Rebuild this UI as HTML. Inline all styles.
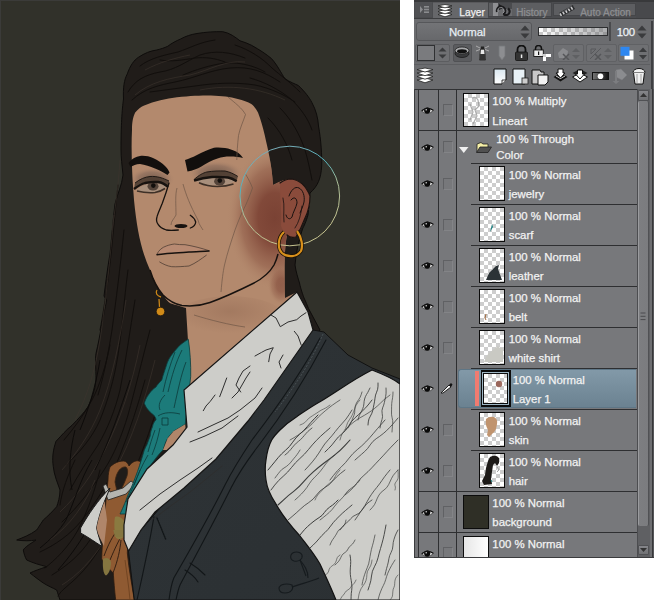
<!DOCTYPE html>
<html><head><meta charset="utf-8">
<style>
*{box-sizing:border-box}
html,body{margin:0;padding:0}
body{width:654px;height:600px;background:#fff;position:relative;overflow:hidden;font-family:"Liberation Sans",sans-serif}
.a{position:absolute}
.a svg{display:block}
#panel{left:414px;top:0;width:240px;height:558px;background:#6b6c6f;overflow:hidden}
.tx{white-space:nowrap;line-height:1;-webkit-text-stroke:0.25px currentColor}
</style></head><body>
<svg class="a" style="left:0;top:0" width="400" height="600" viewBox="0 0 400 600" id="art">
<rect width="400" height="600" fill="#31312a"/><rect x="0" y="0" width="400" height="1" fill="#3b3b39"/><rect x="0" y="0" width="1" height="600" fill="#3b3b39"/>
<defs>
<radialGradient id="blush" cx="0.55" cy="0.5" r="0.5">
<stop offset="0" stop-color="#7a4234"/><stop offset="0.35" stop-color="#7f4637" stop-opacity="0.95"/><stop offset="0.7" stop-color="#8f5a47" stop-opacity="0.55"/><stop offset="1" stop-color="#b3896d" stop-opacity="0"/>
</radialGradient>
<radialGradient id="jawsh" cx="0.5" cy="0.35" r="0.5"><stop offset="0" stop-color="#8f6650" stop-opacity="0.45"/><stop offset="1" stop-color="#8f6650" stop-opacity="0"/></radialGradient>
<clipPath id="skinclip"><path d="M135.2,112.5 C138,109 141,107 143.6,105.7 C155,101 166,99 177,97.3 C190,96 200,95.6 211,95.6 C222,96 230,97 237.8,99 C243,100 248,102 251.3,104 C254,106 256,109 258,112.5 C261,120 263,128 264.7,135 C268,150 272,165 273,185 C280,181 286,179 291,179 C300,180 306,186 310,196 C310,205 308,212 305,218 C302,226 299,232 296,237 C292,238 289,237 287,235 C285,245 284,260 285,298 L297,292 L184,390 L188,341 L186,308 C176,305 172,304 170,303 C166,300 165,297 163,295 C158,289 156,285 155,282 C152,276 151,273 150,270 C141,250 137,230 134,200 C132,175 131,150 132,130 C132,122 133,117 135.2,112.5 Z"/></clipPath>
<linearGradient id="ring" x1="0" y1="0" x2="0.35" y2="1">
<stop offset="0" stop-color="#8aaab4"/><stop offset="0.4" stop-color="#52b2be"/><stop offset="0.62" stop-color="#a9bd98"/><stop offset="1" stop-color="#c6c38f"/>
</linearGradient>
<radialGradient id="shadowL" cx="0.5" cy="0.55" r="0.5">
<stop offset="0" stop-color="#6f5849" stop-opacity="0.95"/><stop offset="0.6" stop-color="#86695a" stop-opacity="0.6"/><stop offset="1" stop-color="#b3896d" stop-opacity="0"/>
</radialGradient>
<radialGradient id="shadowR" cx="0.5" cy="0.55" r="0.5">
<stop offset="0" stop-color="#6f5849" stop-opacity="0.95"/><stop offset="0.6" stop-color="#86695a" stop-opacity="0.6"/><stop offset="1" stop-color="#b3896d" stop-opacity="0"/>
</radialGradient>
<linearGradient id="vestg" x1="0" y1="0" x2="1" y2="1">
<stop offset="0" stop-color="#2e3336"/><stop offset="1" stop-color="#2b3033"/>
</linearGradient>
</defs>
<!-- hair -->
<path fill="#201c19" stroke="#0e0c0b" stroke-width="1" d="M123.5,99 C123,88 124,80 127.3,73.9 C130,66 134,60 138.3,57.4 C145,53 150,51 156.7,50 C161,49 164,48 167.7,46.3 C172,43 176,41 180.6,39 C186,36 191,34.5 197,33.5 C206,32 215,31.5 222.8,31.7 C230,33 235,37 240,40.8 C244,42 248,43.5 251.3,45.2 C260,50 266,54 271.5,58.6 C278,66 281,73 285,78.8 C290,82 295,84 298.4,85.5 C305,92 309,97 311.8,102.4 C316,110 318,118 318.5,126 C321,140 322,155 321.7,166 C321,178 318,186 310,193 L308,215 C306,222 304,226 302.5,229 C299,240 296,252 295,265 C296,272 298,278 299.5,283 C301,290 303,295 304,298 C306,302 307,305 308.5,308.5 L320,330 L200,470 L131,600 L60,600 C59,597 58,594 56.7,590 C53,588 48,586 43.3,583 C39,580 35,577 30,573 C34,571 40,569 46.7,566.7 C40,565 33,563 26.7,560 C25,557 24,554 23.3,550 C25,547 30,544 36,540 C30,541 24,541 16.7,540 C22,538 30,535 36.7,530 C38,528 40,525 43.3,520 C48,516 52,512 56.7,506.7 C58,503 60,497 60,490 C58,484 54,475 53.3,466.7 C52,458 53,450 56,441.3 C62,435 66,430 72,425.3 C78,419 84,413 88,406.7 C92,399 95,390 96,380 C96,368 95,360 96,353.3 C98,345 100,335 101.3,326.7 C103,318 105,308 106.7,300 C106,299 105,298 104,296 C106,280 108,265 110,254 C112,235 113,220 115,204 C117,195 122,185 123,175 C122,165 121,157 121,150 C121,125 122,110 123.5,99 Z"/>
<!-- hair strands -->
<g fill="none" stroke="#100d0b" stroke-width="1" opacity="0.9" stroke-linecap="round">
<path d="M128,92 C135,80 145,75 160,72 C175,70 185,62 200,55 C215,50 230,52 245,58"/>
<path d="M132,100 C145,88 160,85 175,82 C195,78 210,70 230,68 C250,66 265,72 280,82"/>
<path d="M140,66 C150,58 165,55 178,52 C190,48 200,42 215,40"/>
<path d="M150,92 C165,90 180,88 195,86 C215,83 235,82 255,85 C270,88 285,95 295,102"/>
<path d="M160,60 C172,62 182,60 195,58 C205,57 215,58 225,62"/>
<path d="M183,75 C195,70 210,65 225,63 C240,62 255,66 265,72"/>
<path d="M235,45 C250,50 262,58 272,68 C280,75 290,82 300,92"/>
<path d="M250,78 C265,82 280,90 292,100 C300,108 308,118 312,130"/>
<path d="M280,108 C292,120 300,135 305,150 C308,160 310,170 312,180"/>
<path d="M268,118 C280,130 288,145 292,160"/>
<path d="M118,185 C114,220 112,250 108,280 C105,300 103,315 100,330"/>
<path d="M124,230 C120,270 116,300 112,330 C108,355 104,375 98,395"/>
<path d="M128,270 C124,300 122,330 118,355 C114,380 108,400 100,420 C92,438 80,452 66,465"/>
<path d="M135,300 C130,330 126,360 120,390 C115,410 108,428 98,445 C88,460 78,475 70,490"/>
<path d="M150,330 C142,360 135,390 128,415 C122,435 114,455 104,470 C92,488 80,505 62,522"/>
<path d="M110,345 C106,365 100,385 92,400 C84,415 74,428 64,440"/>
<path d="M145,380 C138,405 130,430 120,455 C110,480 98,500 82,520 C70,535 55,545 40,552"/>
<path d="M160,400 C150,430 140,460 128,485"/>
<path d="M100,470 C95,490 88,510 78,530 C68,548 55,560 45,568"/>
<path d="M110,530 C100,550 88,568 72,582 C65,588 60,592 58,596"/>
<path d="M90,540 C80,555 68,565 52,575"/>
<path d="M75,460 C68,475 62,490 60,505"/>
</g>
<g fill="none" stroke="#3d352e" stroke-width="0.8" opacity="0.75"><path d="M114,215 C110,260 106,300 100,340 C95,370 88,395 75,420"/><path d="M126,300 C120,340 112,380 100,410 C90,435 75,455 62,470"/><path d="M140,345 C132,385 120,420 105,450 C92,475 78,495 60,512"/><path d="M155,360 C145,400 132,440 115,470"/><path d="M95,480 C85,505 70,525 50,540"/><path d="M105,540 C92,560 78,575 62,585"/><path d="M120,160 C118,190 115,210 112,230"/>
<path d="M135,95 C150,82 170,78 190,75 C210,70 225,60 245,62"/><path d="M145,70 C160,62 175,58 190,55"/><path d="M200,90 C230,84 260,88 285,100"/>
</g>
<g fill="none" stroke="#0c0a09" stroke-width="1" opacity="0.9">
<path d="M92,460 C80,480 75,500 66,520 C60,530 50,540 40,548"/><path d="M110,480 C95,520 80,545 58,570"/><path d="M75,430 C70,450 68,470 72,490"/>
<path d="M130,380 C120,410 110,440 95,470"/><path d="M100,360 C95,390 88,410 80,430"/>
</g>
<!-- skin face+neck -->
<path fill="#b3896d" d="M135.2,112.5 C138,109 141,107 143.6,105.7 C155,101 166,99 177,97.3 C190,96 200,95.6 211,95.6 C222,96 230,97 237.8,99 C243,100 248,102 251.3,104 C254,106 256,109 258,112.5 C261,120 263,128 264.7,135 C268,150 272,165 273,185 C280,181 286,179 291,179 C300,180 306,186 310,196 C310,205 308,212 305,218 C302,226 299,232 296,237 C292,238 289,237 287,235 C285,245 284,260 285,298 L297,292 L184,390 L188,341 L186,308 C176,305 172,304 170,303 C166,300 165,297 163,295 C158,289 156,285 155,282 C152,276 151,273 150,270 C141,250 137,230 134,200 C132,175 131,150 132,130 C132,122 133,117 135.2,112.5 Z"/>
<g clip-path="url(#skinclip)"><ellipse cx="230" cy="318" rx="55" ry="22" fill="url(#jawsh)"/><ellipse cx="270" cy="218" rx="48" ry="72" fill="url(#blush)"/><ellipse cx="280" cy="285" rx="14" ry="20" fill="url(#blush)" opacity="0.6"/></g>
<!-- ear fill -->
<path fill="#8a4b3b" d="M280,183 C284,180 287,179 291,179 C300,180 306,186 310,196 C310,205 308,212 305,218 C302,226 299,232 296,237 C292,238 289,237 287,235 C284,232 282,229 281,226 C282,215 280,200 280,183 Z"/>
<!-- eye shadows -->
<g clip-path="url(#skinclip)"><ellipse cx="152" cy="178" rx="23" ry="12" fill="url(#shadowL)"/>
<ellipse cx="216" cy="172" rx="28" ry="13" fill="url(#shadowR)"/></g>
<!-- eyebrows -->
<path fill="#120f0d" d="M128.5,163 C132,158.5 136,156.5 140,156 C145,155.5 149,156.5 153,158 C158,160 162,163 165,166 C167,168 168.5,170 169.5,172.5 L167.5,175 C163,172 159,170 155,168.5 C150,166.5 145,164.5 140,164 C136,164 133,165.5 130.5,167 Z"/>
<path fill="#120f0d" d="M185,160 C189,158.5 193,157 196,155.5 C203,152 208,149.5 214,147.8 C218,147 221,147.5 225,148 C229,148.5 233,150 236,151.5 C239,153 241,155 243,158 C239,157 235,156.5 230.3,156.5 C225,156.5 222,157 217.5,158.5 C212,160 206,163.5 201.4,166.5 C197,169 193,170.5 187.5,171.5 Z"/>
<!-- eyelids fill -->
<path d="M135,183 C140,179 145,177 150,176.5 C157,176 163,178 169,181 L168,187 C165,184 162,182.5 158,182 C154,181.5 150,182 145,183 C141,184 138,186 134,189 Z" fill="#4e3d32" opacity="0.9"/>
<path d="M194,179.6 C199,175 203,173 206.8,172 C213,171 219,170.8 225,171 C230,172 234,174 237.8,176.4 L236.7,181.2 C234,179.5 231,178 228,177.5 C224,177 218,176.8 212,177 C205,177.5 199,179 194,180.7 Z" fill="#4e3d32" opacity="0.9"/>
<path d="M136,190 C142,185 148,183.5 155,183 C160,183 164,184.5 167,187 C162,190 157,192 150,192 C144,192 140,191.5 136,190 Z" fill="#a88f7c"/>
<path d="M196,181 C202,178.5 208,177.5 214,177.3 C222,177 228,178 235,181 C231,184 225,185.5 217,185.5 C208,185.5 201,183.5 196,181 Z" fill="#a88f7c"/>
<ellipse cx="153" cy="186.3" rx="5.5" ry="4.3" fill="#54443a"/><circle cx="153.3" cy="185.6" r="2.3" fill="#120f0d"/>
<ellipse cx="219.6" cy="181.3" rx="5.5" ry="4.3" fill="#54443a"/><circle cx="219.8" cy="180.6" r="2.3" fill="#120f0d"/>
<g fill="none" stroke="#17120f">
<path d="M134,189 C138,186 141,184 145,183 C150,182 154,181.5 158,182 C162,182.5 165,184 168,187" stroke-width="2.3"/>
<path d="M135,183 C140,179 145,177 150,176.5 C157,176 163,178 169,181" stroke-width="0.9"/>
<path d="M137,191 C143,192.5 149,193 155,192.5 C159,192 162,190.5 165,188.5" stroke-width="1.6" stroke="#3e3027"/>
<path d="M194,180.7 C199,179 205,177.5 212,177 C218,176.8 224,177 228,177.5 C231,178 234,179.5 236.7,181.2" stroke-width="2.3"/>
<path d="M194,179.6 C199,175 203,173 206.8,172 C213,171 219,170.8 225,171 C230,172 234,174 237.8,176.4" stroke-width="0.9"/>
<path d="M199,182.8 C205,185.5 211,186.5 217.5,186.5 C224,186.5 229,185.5 233.5,184" stroke-width="1.6" stroke="#3e3027"/>
</g>
<!-- nose -->
<g fill="none" stroke="#17120f" stroke-linecap="round">
<path d="M169,183 C167,190 165,196 162.3,203.3 C160,209 158,213 157,216.7 C156,220 157,223 158.3,224.7 C160,227.5 163,229 166.3,230 C170,230.5 174,230.3 178.3,230" stroke-width="1.3"/>
<path d="M190.3,215.3 C193,217 195,219.5 195.7,222 C195.5,225 193,227 190.3,228" stroke-width="1.3"/>
</g>
<ellipse cx="181" cy="226" rx="6.5" ry="2" fill="#17120f"/>
<g fill="none" stroke="#6f5646" stroke-width="0.7">
<path d="M177,188 C175,195 176,205 176,215 C174,219 171,221 171,225"/>
<path d="M183,184 C186,195 190,205 198,220 C199,225 202,228 203,230"/>
<path d="M228,97 C235,103 242,108 245.5,114.5 C243,122 240,128 238.5,135.5 C237.5,145 237,152 236.8,160"/><path d="M245.5,174 C249,180 251,184 252.5,188 C250,195 248,200 245.5,205.5 C241,214 238,222 235,230 C231,242 227,254 224.5,265 C223,272 222,280 221,292"/>
<path d="M194,315 C210,320 230,325 245,327"/>
</g>
<!-- lips -->
<path d="M157,254.5 C159,250 162,247.5 166.3,246 C169,245 171,244.5 174.3,244 C178,244.5 181,244.8 185,244.7 C193,246 201,248 209,250.7 C201,251.5 195,251.8 189,252 C180,252.8 170,253.5 157,254.5 Z" fill="#b88a72"/>
<g fill="none" stroke="#17120f" stroke-linecap="round">
<path d="M157,254 C159,250 162,247.5 166.3,246 C169,245 171,244.5 174.3,244 C178,244.5 181,244.8 185,244.7 C193,246 201,248 209,250.7" stroke-width="0.8" stroke="#4f3e33"/>
<path d="M157,254.7 C162,254.2 166,253.6 171.7,253.3 C177,253 183,252.5 189,252 C195,251.8 202,251.3 209,251" stroke-width="1.5"/>
<path d="M159.7,262 C163,264 167,266 171.7,266.7 C177,267 183,266.5 189,266 C196,263 201,259 206.3,255.3" stroke-width="0.8" stroke="#4f3e33"/>
</g>
<!-- jaw line -->
<path d="M150,270 C153,280 157,288 163,295 C168,300 174,304 182,305.5 C190,306.5 200,306 210,302.5 C225,297 240,290 253,283.5 C262,279 270,272 274,265 C276,261 277,258 278,254" fill="none" stroke="#17120f" stroke-width="1.5"/>
<!-- ear details -->
<g fill="none" stroke="#1a1210" stroke-width="1" stroke-linecap="round">
<path d="M280,183 C284,180 287,179 291,179 C300,180 306,186 310,196 C310,205 308,212 305,218 C302,226 299,232 296,237 C292,238 289,237 287,235" stroke-width="1.2"/>
<path d="M289,196 C291,190 295,186 299,188 C303,190 305,196 304,202 C303,207 301,210 300,213"/>
<path d="M291,200 C294,196 297,198 297,203 C296,208 293,212 292,217 C290,220 287,219 286,215"/>
<path d="M283,198 C285,206 283,214 284,222" stroke-width="0.8"/>
<path d="M302,206 C301,215 299,222 295,228" stroke-width="0.8"/>
</g>
<!-- left earring -->
<g fill="none" stroke="#d08a18" stroke-width="1.3"><path d="M157,290 C155,293 157,296 161,297"/><path d="M159,299 L159.5,307"/></g>
<circle cx="160.5" cy="311.5" r="4.3" fill="#d08a18" stroke="#1a1410" stroke-width="0.8"/>
<!-- leather -->
<path fill="#8f5a32" stroke="#2a1a10" stroke-width="0.8" d="M110,467 C114,463 119,461 123.3,461 C126,461 128,463 129,466 C132,462 137,459 140.6,462 C139,478 135,493 132,506.6 C130,520 128,535 127.3,553 C129,570 132,585 134.3,600 L115.7,600 C114.5,590 113.8,580 113.3,573 C108,568 104,563 101.7,559 C102,550 102.5,542 102.8,535.8 C104,520 106,500 108,480 C108,474 109,470 110,467 Z"/><path d="M115,482 C116,472 121,466 126,467 C128,469 128,472 127,476 C124,484 121,490 118,496 Z" fill="#201c19" stroke="#3a2414" stroke-width="0.8"/><path d="M104,556 C108,545 113,535 118,530 M110,560 C115,548 119,540 122,535 M113,573 C118,560 120,550 121,540" fill="none" stroke="#2a1a10" stroke-width="0.9"/><path d="M125,560 C127,575 129,588 130,600" fill="none" stroke="#6a3f1e" stroke-width="0.8"/>
<path fill="#8a7a40" d="M115,517 C120,515 126,520 126,530 C125,538 120,541 116,538 C114,530 114,522 115,517 Z"/>
<path fill="#857640" d="M103,559 C106,557 110,558 111,562 C111,568 109,574 106,575.5 C103,574 102.5,566 103,559 Z"/><path fill="#857640" d="M113.3,530 L125,530 L124,537 L115,537 Z"/>
<path fill="#b5b5b0" stroke="#222" stroke-width="0.8" d="M103,486 L108,500 L126,494 L135,484 L131,481 L123,488 L110,492 L106,484 Z"/>
<!-- scarf -->
<path fill="#1c7b7a" stroke="#0c3c3c" stroke-width="0.8" d="M188.3,339.3 C182,343 179,346 176.7,348.7 C172,354 169,358 167.3,362.7 C165,370 163,375 161.8,380 C159,383 157,385 156,387 C153,389 151,391 149,394 C146,398 145,401 144.3,403.3 C145,405 146,407 146.7,408 C149,411 151,413 153.7,415 C155,417 156,418 156,419.7 C154,422 153,424 152.5,426.7 C151,430 150.5,433 150.2,436 C149,439 148,442 146.7,445.3 C145.5,447 145,449 144.3,450 C141,462 135,480 128,495 C125,503 122,510 120,514 L127,514 C132,505 138,490 145,475 C150,465 158,455 163,450 C165,444 166,441 167.7,438.3 C170,435 172,433 173.5,431.3 C177,429 181,427 185.2,424.3 L190.7,376.7 C191,365 190,350 188.3,339.3 Z"/>
<g fill="none" stroke="#0c3a3a" stroke-width="0.8">
<path d="M182,350 C176,362 172,375 168,392"/><path d="M186,362 C181,375 178,390 174,408"/><path d="M175,352 C170,365 166,378 163,392"/><path d="M165,395 C160,400 158,405 160,410"/>
<path d="M158,416 C164,412 172,412 180,414"/><path d="M162,418 L168,418 L168,425 L162,425 Z"/><path d="M155,430 C152,438 150,445 148,452"/><path d="M160,428 C158,438 156,445 152,455"/>
<path d="M140,470 C136,480 132,490 126,502"/><path d="M148,455 C142,465 138,475 134,485"/>
</g>
<!-- skin between knot and collar -->
<path fill="#b0866a" d="M185.2,424.3 L173.5,431.3 L167.7,438.3 L163,450 L188,450 Z"/>
<!-- left sleeve -->
<path fill="#cdcdc9" stroke="#1a1a1a" stroke-width="1" d="M80.6,528 C88,515 98,500 110,488 L104.6,501 C101,510 98,520 96.6,528 C98,535 100,540 102,546.5 C95,542 88,537 80.6,533 Z"/>
<path fill="#b0866a" d="M96.6,528 C98,520 101,510 104.6,501 L107,520 L104,546 C101,540 98,535 96.6,528 Z"/>
<!-- vest (base) -->
<path fill="url(#vestg)" stroke="#111" stroke-width="1" d="M313,330 L324,332 L348,355 L372,368 L400,379 L400,600 L134.3,600 L128.5,551 L141,530 Z"/>
<g fill="none" stroke="#121618" stroke-width="1.1" stroke-linecap="round">
<path d="M320,338 C300,375 275,410 252,440 C240,458 230,475 225,485 C210,515 190,550 173.8,578 C171,585 170,592 169,600"/>
<path d="M326,340 C306,378 282,415 259,445 C246,462 236,478 231,488 C215,520 196,555 180,585 C178,590 177,595 176,600"/>
<path d="M154,516.7 C150,540 145,565 137,600"/>
<path d="M157,518 L166,540" stroke-dasharray="1.2,1.2" stroke-width="1.4"/>
<path d="M190,563 C195,566 200,570 205,575"/><path d="M185,570 C190,573 195,577 198,582"/>
</g>
<path d="M323,334 C312,360 296,385 275,412" fill="none" stroke="#515b60" stroke-width="0.7" stroke-dasharray="2,1.5"/>
<!-- white shirt front/collar -->
<path fill="#cdcdc9" stroke="#151515" stroke-width="1.2" d="M297,292 L308,312 L313,330 L264,400 L248,421 L216,459 L184,488 L155,512 L141,530 L128.5,551 L124,540 L124,525 L128,499 L147,469 L173,445 L187,427 L184,390 Z"/>
<!-- right sleeve -->
<path fill="#cdcdc9" stroke="#111" stroke-width="1.2" d="M372,370 C385,375 395,380 400,384 L400,600 L336,600 C330,585 325,575 320,564 C313,552 306,544 300,536 C290,525 282,515 276,504 C270,495 267,488 266,480 C265,473 265,466 266,460 C267,452 269,445 271.7,440 C274,436 277,433 280,430 C285,425 290,421 296.7,416.7 C305,411 312,406 320,401.7 C335,393 352,380 372,370 Z"/>
<g fill="none" stroke-linecap="round">
<path d="M268.0,470.0 L271.4,465.9 Q274.8,461.8 278.1,457.7 Q281.5,453.6 285.6,450.2 Q289.8,446.7 292.7,442.2 Q295.6,437.7 299.7,434.2 Q303.8,430.8 307.2,426.7 Q310.6,422.6 314.3,418.8 L318.0,415.0" stroke="#3b3c3b" stroke-width="1.0"/>
<path d="M271.0,490.0 L274.7,485.1 Q278.5,480.2 283.2,476.3 Q287.9,472.3 291.6,467.4 Q295.3,462.5 299.9,458.5 Q304.6,454.4 308.4,449.6 Q312.2,444.8 316.4,440.4 Q320.7,436.0 325.3,432.0 L330.0,428.0" stroke="#3b3c3b" stroke-width="0.9"/>
<path d="M278.0,505.0 L283.1,500.3 Q288.1,495.5 293.7,491.4 Q299.2,487.2 303.7,481.7 Q308.1,476.3 313.3,471.8 Q318.6,467.2 324.1,463.0 Q329.7,458.9 335.1,454.6 Q340.6,450.3 345.3,445.1 L350.0,440.0" stroke="#3b3c3b" stroke-width="1.1"/>
<path d="M288.0,520.0 L292.1,516.5 Q296.3,513.0 300.2,509.3 Q304.1,505.5 308.7,502.6 Q313.4,499.6 316.5,495.0 Q319.7,490.4 324.5,487.8 Q329.4,485.1 332.9,480.9 Q336.4,476.7 340.7,473.3 L345.0,470.0" stroke="#3b3c3b" stroke-width="0.8"/>
<path d="M300.0,535.0 L302.4,532.1 Q304.7,529.2 307.4,526.7 Q310.1,524.2 313.0,521.9 Q315.9,519.6 319.1,517.6 Q322.4,515.7 324.4,512.5 Q326.5,509.3 329.6,507.2 Q332.7,505.2 335.4,502.6 L338.0,500.0" stroke="#3b3c3b" stroke-width="1.0"/>
<path d="M310.0,548.0 L313.1,545.1 Q316.3,542.1 319.0,538.8 Q321.7,535.4 324.9,532.6 Q328.1,529.7 330.6,526.1 Q333.1,522.5 336.1,519.4 Q339.1,516.4 342.2,513.4 Q345.4,510.5 348.7,507.8 L352.0,505.0" stroke="#3b3c3b" stroke-width="0.9"/>
<path d="M285.0,455.0 L287.1,453.3 Q289.2,451.5 290.9,449.3 Q292.6,447.1 294.4,445.1 Q296.2,443.0 298.4,441.4 Q300.6,439.8 302.4,437.7 Q304.2,435.6 306.0,433.5 Q307.7,431.4 309.9,429.7 L312.0,428.0" stroke="#3b3c3b" stroke-width="0.8"/>
<path d="M305.0,470.0 L308.7,466.0 Q312.4,462.0 315.7,457.6 Q318.9,453.2 321.7,448.5 Q324.5,443.8 328.3,439.8 Q332.0,435.9 335.3,431.5 Q338.6,427.2 342.4,423.2 Q346.2,419.3 349.1,414.6 L352.0,410.0" stroke="#3b3c3b" stroke-width="0.8"/>
<path d="M325.0,452.0 L328.6,448.5 Q332.2,445.0 335.1,440.9 Q338.0,436.7 342.1,433.7 Q346.2,430.7 348.6,426.1 Q351.0,421.5 354.7,418.1 Q358.4,414.7 362.1,411.3 Q365.9,407.9 368.9,404.0 L372.0,400.0" stroke="#3b3c3b" stroke-width="0.9"/>
<path d="M330.0,480.0 L333.5,475.4 Q337.1,470.7 341.4,466.8 Q345.7,462.8 349.1,458.1 Q352.6,453.4 357.2,449.7 Q361.8,446.1 365.8,441.9 Q369.9,437.7 373.6,433.2 Q377.3,428.7 381.2,424.4 L385.0,420.0" stroke="#3b3c3b" stroke-width="0.8"/>
<path d="M345.0,495.0 L349.2,491.5 Q353.4,487.9 356.6,483.4 Q359.7,478.9 363.9,475.4 Q368.1,471.8 371.8,467.8 Q375.5,463.8 379.3,459.8 Q383.0,455.9 386.7,451.8 Q390.3,447.8 394.2,443.9 L398.0,440.0" stroke="#3b3c3b" stroke-width="0.8"/>
<path d="M320.0,520.0 L323.2,517.5 Q326.4,515.0 329.4,512.3 Q332.4,509.5 334.7,506.2 Q337.1,502.8 340.1,500.1 Q343.2,497.5 345.4,494.0 Q347.6,490.5 351.2,488.3 Q354.7,486.1 357.4,483.1 L360.0,480.0" stroke="#3b3c3b" stroke-width="0.7"/>
<path d="M370.0,388.0 L368.9,390.2 Q367.9,392.4 366.5,394.5 Q365.2,396.6 364.6,399.0 Q364.0,401.4 363.9,403.9 Q363.7,406.5 362.7,408.7 Q361.7,411.0 360.5,413.1 Q359.2,415.3 358.6,417.6 L358.0,420.0" stroke="#3b3c3b" stroke-width="0.8"/>
<path d="M378.0,383.0 L378.0,386.2 Q378.0,389.3 376.6,392.2 Q375.3,395.0 375.0,398.1 Q374.7,401.2 374.0,404.2 Q373.4,407.3 372.8,410.3 Q372.1,413.3 370.4,416.1 Q368.6,418.8 368.3,421.9 L368.0,425.0" stroke="#3b3c3b" stroke-width="0.9"/>
<path d="M386.0,388.0 L386.1,390.9 Q386.2,393.9 385.6,396.7 Q385.0,399.5 384.4,402.4 Q383.8,405.2 382.6,407.9 Q381.5,410.7 382.2,413.7 Q383.0,416.8 382.0,419.5 Q381.0,422.3 380.5,425.2 L380.0,428.0" stroke="#3b3c3b" stroke-width="0.8"/>
<path d="M393.0,392.0 L392.9,394.9 Q392.7,397.7 392.1,400.6 Q391.6,403.4 391.6,406.3 Q391.6,409.1 391.5,412.0 Q391.3,414.8 392.1,417.7 Q393.0,420.6 392.7,423.4 Q392.4,426.3 392.2,429.1 L392.0,432.0" stroke="#3b3c3b" stroke-width="0.7"/>
<path d="M362.0,392.0 L361.2,394.6 Q360.4,397.3 358.7,399.6 Q356.9,401.9 355.8,404.4 Q354.7,406.9 354.8,409.9 Q355.0,413.0 353.9,415.5 Q352.9,418.1 351.8,420.6 Q350.7,423.1 349.4,425.6 L348.0,428.0" stroke="#3b3c3b" stroke-width="0.7"/>
<path d="M350.0,555.0 L350.5,558.2 Q350.9,561.4 350.6,564.6 Q350.3,567.9 350.2,571.1 Q350.2,574.3 350.7,577.5 Q351.3,580.7 351.7,583.9 Q352.2,587.1 351.7,590.3 Q351.1,593.6 351.1,596.8 L351.0,600.0" stroke="#3b3c3b" stroke-width="0.9"/>
<path d="M362.0,585.0 L362.7,581.4 Q363.5,577.8 364.7,574.3 Q365.9,570.8 367.4,567.3 Q368.9,563.9 369.4,560.2 Q370.0,556.6 370.7,552.9 Q371.3,549.3 372.4,545.8 Q373.5,542.2 374.2,538.6 L375.0,535.0" stroke="#3b3c3b" stroke-width="0.7"/>
<path d="M368.0,590.0 L369.5,585.4 Q371.1,580.9 371.5,576.0 Q371.9,571.1 374.4,566.8 Q376.9,562.5 378.0,557.8 Q379.1,553.1 380.5,548.5 Q381.9,543.9 383.1,539.2 Q384.3,534.5 385.1,529.8 L386.0,525.0" stroke="#3b3c3b" stroke-width="0.9"/>
<path d="M385.0,575.0 L385.8,571.7 Q386.5,568.5 387.5,565.3 Q388.4,562.1 388.9,558.7 Q389.4,555.4 391.1,552.4 Q392.8,549.4 392.9,545.9 Q393.0,542.5 394.0,539.3 Q394.9,536.1 396.4,533.0 L398.0,530.0" stroke="#3b3c3b" stroke-width="0.8"/>
<path d="M378.0,600.0 L378.8,597.0 Q379.6,593.9 380.8,591.1 Q381.9,588.2 383.4,585.4 Q384.8,582.7 385.7,579.6 Q386.5,576.6 387.6,573.7 Q388.8,570.8 390.2,568.1 Q391.6,565.3 393.3,562.7 L395.0,560.0" stroke="#3b3c3b" stroke-width="0.7"/>
<path d="M340.0,530.0 L341.9,527.4 Q343.8,524.8 346.3,523.0 Q348.9,521.1 350.8,518.6 Q352.7,516.1 355.9,514.9 Q359.1,513.7 361.1,511.2 Q363.1,508.8 364.9,506.2 Q366.7,503.5 369.4,501.8 L372.0,500.0" stroke="#3b3c3b" stroke-width="0.8"/>
<path d="M330.0,545.0 L330.8,543.0 Q331.7,541.0 332.9,539.3 Q334.2,537.6 335.3,535.8 Q336.5,534.1 337.4,532.1 Q338.2,530.1 340.3,528.9 Q342.3,527.7 343.6,526.0 Q345.0,524.4 345.5,522.2 L346.0,520.0" stroke="#3b3c3b" stroke-width="0.7"/>
<path d="M355.0,520.0 L357.5,516.4 Q359.9,512.8 362.4,509.2 Q365.0,505.7 367.0,501.8 Q369.0,497.9 371.5,494.3 Q374.0,490.7 376.8,487.4 Q379.6,484.0 382.0,480.4 Q384.4,476.7 387.2,473.4 L390.0,470.0" stroke="#3b3c3b" stroke-width="0.8"/>
<path d="M370.0,510.0 L372.4,507.4 Q374.8,504.9 376.0,501.4 Q377.2,498.0 379.0,495.0 Q380.8,492.0 384.0,490.0 Q387.1,487.9 388.6,484.7 Q390.1,481.5 391.6,478.3 Q393.1,475.1 395.6,472.6 L398.0,470.0" stroke="#3b3c3b" stroke-width="0.7"/>
<path d="M395.0,490.0 L395.3,488.6 Q395.6,487.2 395.0,485.6 Q394.5,484.1 395.4,482.8 Q396.4,481.4 397.3,480.1 Q398.1,478.8 398.2,477.3 Q398.2,475.9 398.2,474.4 Q398.2,472.9 398.1,471.5 L398.0,470.0" stroke="#3b3c3b" stroke-width="0.6"/>
<path d="M340.0,600.0 L340.9,598.3 Q341.7,596.7 343.0,595.4 Q344.3,594.0 345.2,592.4 Q346.1,590.8 347.9,589.9 Q349.8,589.1 350.6,587.4 Q351.5,585.8 352.9,584.6 Q354.4,583.4 355.2,581.7 L356.0,580.0" stroke="#3b3c3b" stroke-width="0.6"/>
<path d="M275.0,478.0 L276.6,475.8 Q278.2,473.7 279.9,471.6 Q281.5,469.4 284.0,468.0 Q286.4,466.6 288.4,464.8 Q290.4,463.0 292.0,460.8 Q293.6,458.7 295.4,456.7 Q297.1,454.6 298.6,452.3 L300.0,450.0" stroke="#3b3c3b" stroke-width="0.7"/>
<path d="M295.0,500.0 L298.2,497.1 Q301.4,494.2 304.2,490.9 Q307.0,487.6 309.2,483.9 Q311.5,480.2 314.7,477.2 Q317.9,474.3 320.6,470.9 Q323.2,467.6 325.7,464.0 Q328.2,460.5 331.6,457.7 L335.0,455.0" stroke="#3b3c3b" stroke-width="0.7"/>
<path d="M315.0,500.0 L316.2,497.4 Q317.5,494.8 319.6,492.9 Q321.6,491.0 323.4,488.8 Q325.2,486.7 327.4,485.0 Q329.7,483.2 331.8,481.3 Q333.9,479.4 335.1,476.8 Q336.3,474.2 338.2,472.1 L340.0,470.0" stroke="#3b3c3b" stroke-width="0.6"/>
<path d="M290.0,440.0 L294.0,437.7 Q298.0,435.3 301.6,432.5 Q305.2,429.7 308.7,426.8 Q312.3,423.9 315.3,420.4 Q318.3,416.8 321.8,413.8 Q325.2,410.8 328.8,407.9 Q332.3,405.1 336.2,402.5 L340.0,400.0" stroke="#3b3c3b" stroke-width="0.7"/>
<path d="M345.0,430.0 L347.9,427.1 Q350.9,424.3 354.1,421.8 Q357.3,419.3 360.9,417.3 Q364.5,415.3 368.0,413.1 Q371.5,410.9 374.6,408.4 Q377.8,405.8 380.7,402.9 Q383.5,400.0 386.8,397.5 L390.0,395.0" stroke="#3b3c3b" stroke-width="0.7"/>
<path d="M355.0,460.0 L358.2,457.2 Q361.5,454.3 364.7,451.5 Q367.9,448.6 370.2,444.9 Q372.6,441.1 376.2,438.7 Q379.9,436.3 383.2,433.6 Q386.6,430.9 389.5,427.7 Q392.4,424.6 395.2,421.3 L398.0,418.0" stroke="#3b3c3b" stroke-width="0.8"/>
<path d="M335.0,565.0 L336.7,563.4 Q338.4,561.9 339.6,559.9 Q340.7,557.8 341.7,555.7 Q342.8,553.7 345.0,552.5 Q347.1,551.3 348.0,549.0 Q348.9,546.8 350.9,545.5 Q352.8,544.1 353.9,542.1 L355.0,540.0" stroke="#3b3c3b" stroke-width="0.7"/>
<path d="M325.0,575.0 L326.6,574.0 Q328.3,573.0 328.7,571.0 Q329.0,569.1 330.1,567.7 Q331.2,566.3 332.9,565.3 Q334.6,564.4 335.4,562.7 Q336.3,561.1 336.7,559.2 Q337.1,557.3 338.5,556.1 L340.0,555.0" stroke="#3b3c3b" stroke-width="0.6"/>
<path d="M358.0,600.0 L358.5,597.0 Q358.9,593.9 360.0,591.1 Q361.0,588.2 363.1,585.7 Q365.1,583.3 366.0,580.4 Q366.9,577.4 366.9,574.3 Q367.0,571.1 369.0,568.6 Q370.9,566.0 371.5,563.0 L372.0,560.0" stroke="#3b3c3b" stroke-width="0.6"/>
<path d="M390.0,600.0 L391.3,598.4 Q392.5,596.9 392.6,594.9 Q392.7,593.0 392.9,591.1 Q393.0,589.1 393.9,587.5 Q394.7,585.8 394.7,583.8 Q394.7,581.8 395.1,580.0 Q395.5,578.1 396.7,576.6 L398.0,575.0" stroke="#3b3c3b" stroke-width="0.6"/>
<path d="M360.0,400.0 L357.9,402.5 Q355.9,405.1 354.9,408.2 Q353.9,411.2 352.6,414.2 Q351.4,417.1 349.4,419.7 Q347.4,422.3 346.6,425.5 Q345.9,428.7 343.9,431.2 Q341.9,433.8 340.9,436.9 L340.0,440.0" stroke="#3b3c3b" stroke-width="0.6"/>
<path d="M300.0,425.0 L302.4,424.0 Q304.8,423.0 306.5,420.8 Q308.1,418.6 310.3,417.2 Q312.4,415.8 314.6,414.4 Q316.8,413.1 318.9,411.6 Q321.0,410.1 323.4,409.1 Q325.9,408.1 327.9,406.5 L330.0,405.0" stroke="#3b3c3b" stroke-width="0.6"/>
<g fill="none" stroke="#2e2e2e" stroke-width="1" stroke-linejoin="round" stroke-linecap="round"><path d="M271,315 L276,318 L280.3,326.7 L288,322 L296.7,319.7 L301,316 L306,312.7"/><path d="M294.3,331.3 L298,336 L301.3,345.3"/><path d="M255,356 L261.7,352.3 L266,350 L273.3,347.7 L270,354 L268.7,361.7"/><path d="M250,366 L243,371 L239,378 L236,385 L240.7,392"/><path d="M226.7,378 L223,388 L219.7,396.7"/><path d="M215,395 L210.3,401.3 L206,406 L203.3,410.7"/><path d="M283,355 L279,362 L281,368"/><path d="M198,432 L215,424 L228,418 L240,410 L255,398 L262,388"/><path d="M190,442 L205,436 L222,428 L238,416"/><path d="M140,510 L160,494 L180,480 L198,468 L212,458"/><path d="M152,520 L172,505 L190,492 L205,480 L222,466"/><path d="M232,398 L238,392 L246,378 L250,372"/></g>
</g>
<g fill="none" stroke="#161b1e" stroke-width="1.1"><path d="M291,555 C293,551 300,551 302,555 C303,559 299,562 294,561 C291,560 290,558 291,555 Z"/><path d="M300,560 C304,565 308,570 308,578"/><path d="M279,588 C280,584 287,583 292,585 C294,589 291,593 285,593 C281,593 279,591 279,588 Z"/><path d="M292,587 C300,584 310,582 319,578"/><path d="M300,560 L306,576"/></g>
<!-- ring -->
<circle cx="289.8" cy="196" r="49.8" fill="none" stroke="url(#ring)" stroke-width="1"/>
<!-- earring -->
<path d="M284,232 C278,237 277,248 282,253 C288,258 297,257 301,251 C303,246 302,238 297,231" fill="none" stroke="#1a1208" stroke-width="3.6"/><path d="M284,232 C278,237 277,248 282,253 C288,258 297,257 301,251 C303,246 302,238 297,231" fill="none" stroke="#d8901c" stroke-width="2.2"/>
</svg>
<div id="panel" class="a">
<div class="a" style="left:0px;top:0px;width:240px;height:19px;background:#4b4c4f"></div><div class="a" style="left:0px;top:0px;width:240px;height:2px;background:#38393b"></div><div class="a" style="left:1px;top:2px;width:17px;height:15px;background:#505154"></div><svg class="a" style="left:5px;top:5px" width="10" height="9" viewBox="0 0 10 9"><path d="M1,1 L4,4.5 L1,8 Z" fill="#8a8b8e"/><rect x="5" y="1" width="5" height="1.6" fill="#8a8b8e"/><rect x="5" y="3.7" width="5" height="1.6" fill="#8a8b8e"/><rect x="5" y="6.4" width="5" height="1.6" fill="#8a8b8e"/></svg><div class="a" style="left:19px;top:2px;width:55px;height:17px;background:#66676a;border-top:1px solid #59595c"></div><svg class="a" style="left:23px;top:4px" width="16" height="14" viewBox="0 0 16 14"><g fill="#fff" stroke="#222" stroke-width="0.8"><path d="M1,10.5 L8,8.5 L15,10.5 L8,12.8 Z"/><path d="M1,7.5 L8,5.5 L15,7.5 L8,9.8 Z"/><path d="M1,4.5 L8,2.5 L15,4.5 L8,6.8 Z"/><path d="M1,1.8 L8,0.5 L15,1.8 L8,3.8 Z"/></g></svg><div class="a tx" style="left:45.30000000000001px;top:7.77px;font-size:10.2px;color:#f0f0f0;">Layer</div><div class="a" style="left:74px;top:2px;width:64px;height:15px;background:#5d5e61;border:1px solid #454649"></div><svg class="a" style="left:79px;top:3px" width="19" height="13" viewBox="0 0 19 13"><rect x="0" y="0" width="19" height="13" fill="#4a4b4e"/><rect x="0" y="0" width="5" height="13" fill="#8e8f92"/><rect x="5" y="6" width="14" height="7" fill="#6a6b6e"/><path d="M4,9 A4.2,4.2 0 1 1 10,11.5" fill="none" stroke="#1c1c1e" stroke-width="2.2"/><path d="M11,11.5 A3.6,3.6 0 1 0 15,5.5" fill="none" stroke="#1c1c1e" stroke-width="2.2"/><path d="M6,1 L11,4.5 L6,7 Z" fill="#1c1c1e"/><path d="M5,9 A3.2,3.2 0 1 1 9.5,10.5" fill="none" stroke="#b8b9bc" stroke-width="0.7"/></svg><div class="a tx" style="left:102.29999999999995px;top:7.75px;font-size:10px;color:#8d8e91;">History</div><div class="a" style="left:139px;top:2.5px;width:83px;height:13.5px;background:#5d5e61;border:1px solid #454649"></div><svg class="a" style="left:145px;top:5px" width="16" height="11" viewBox="0 0 16 11"><path d="M1,10 L15,2" fill="none" stroke="#2a2b2d" stroke-width="4.5"/><path d="M1,10 L15,2" fill="none" stroke="#c9c9cb" stroke-width="3" stroke-dasharray="1.6,1.6"/><path d="M4,7 L12,1" fill="none" stroke="#5a5b5e" stroke-width="1"/></svg><div class="a tx" style="left:166.20000000000005px;top:7.55px;font-size:10px;color:#8d8e91;">Auto Action</div><div class="a" style="left:222px;top:2px;width:18px;height:17px;background:#48494c"></div><div class="a" style="left:0px;top:19px;width:240px;height:70px;background:#6b6c6f"></div><div class="a" style="left:0px;top:18px;width:240px;height:1px;background:#3c3d3f"></div><div class="a" style="left:2px;top:22px;width:116px;height:19px;background:linear-gradient(#737477,#67686b);border:1px solid #56575a;border-radius:3px"></div><div class="a tx" style="left:34.89999999999998px;top:26.98px;font-size:11.4px;color:#e8eef4;">Normal</div><svg class="a" style="left:106px;top:25px" width="10" height="14" viewBox="0 0 10 14"><path d="M0.5,5.5 L5,0.5 L9.5,5.5 Z" fill="#3a3b3d"/><path d="M0.5,8.5 L5,13.5 L9.5,8.5 Z" fill="#3a3b3d"/></svg><div class="a" style="left:124px;top:26.5px;width:70px;height:9.5px;border:1px solid #2e2f31;background-color:#fff;background-image:linear-gradient(90deg,rgba(107,108,111,0) 0%,rgba(107,108,111,0.55) 100%),linear-gradient(45deg,#c9c9c9 25%,transparent 25%,transparent 75%,#c9c9c9 75%),linear-gradient(45deg,#c9c9c9 25%,transparent 25%,transparent 75%,#c9c9c9 75%);background-size:100% 100%,8px 8px,8px 8px;background-position:0 0,0 0,4px 4px"></div><div class="a" style="left:194.5px;top:22.3px;width:2.5px;height:19px;background:#5a5b5e;border:1px solid #4a4b4e"></div><div class="a tx" style="left:202.79999999999995px;top:26.68px;font-size:11.4px;color:#eef2f6;letter-spacing:-0.4px">100</div><svg class="a" style="left:223px;top:25px" width="10" height="14" viewBox="0 0 10 14"><path d="M0.5,5.5 L5,0.5 L9.5,5.5 Z" fill="#3a3b3d"/><path d="M0.5,8.5 L5,13.5 L9.5,8.5 Z" fill="#3a3b3d"/></svg><div class="a" style="left:237px;top:21px;width:1.5px;height:68px;background:#3f4043"></div><div class="a" style="left:1px;top:43.7px;width:35px;height:18.5px;background:#6f7073;border:1px solid #5c5d60;border-radius:2px"></div><div class="a" style="left:3px;top:45px;width:18px;height:15.5px;background:#7a7b7e;border:1px solid #2f3032"></div><svg class="a" style="left:24px;top:47px" width="9" height="12" viewBox="0 0 9 12"><path d="M0.5,4.5 L4.5,0.5 L8.5,4.5 Z" fill="#3a3b3d"/><path d="M0.5,7.5 L4.5,11.5 L8.5,7.5 Z" fill="#3a3b3d"/></svg><div class="a" style="left:38.5px;top:43.7px;width:19.3px;height:18.5px;background:#5b5c5f;border:1px solid #505154;border-radius:2px"></div><svg class="a" style="left:40px;top:46px" width="16" height="12" viewBox="0 0 16 12"><ellipse cx="8" cy="7.5" rx="7" ry="4" fill="#3a3b3d" stroke="#1a1a1a" stroke-width="0.8"/><ellipse cx="8" cy="4.5" rx="7" ry="3.5" fill="#a8a9ab" stroke="#222" stroke-width="0.8"/><ellipse cx="8" cy="5.2" rx="5" ry="2" fill="#111"/></svg><svg class="a" style="left:62px;top:45px" width="13" height="16" viewBox="0 0 13 16"><path d="M4.5,4 L8.5,4 L9.5,15 L3.5,15 Z" fill="#e8e8e8" stroke="#222" stroke-width="0.8"/><rect x="5" y="1.5" width="3" height="3" fill="#222"/><path d="M0,1 L4,3 M13,1 L9,3 M0,6 L4,4.5 M13,6 L9,4.5" stroke="#bbb" stroke-width="0.8"/><rect x="3.8" y="9" width="5.5" height="6" fill="#333"/></svg><svg class="a" style="left:83px;top:45px" width="10" height="16" viewBox="0 0 10 16"><path d="M2,1 L8,1 L8,11 L5,15 L2,11 Z" fill="#8d8e91" stroke="#77787b" stroke-width="0.8"/></svg><svg class="a" style="left:100px;top:44.5px" width="15" height="16" viewBox="0 0 15 16"><path d="M3.5,7 L3.5,4.5 A4,4 0 0 1 11.5,4.5 L11.5,7" fill="none" stroke="#111" stroke-width="1.8"/><rect x="1.5" y="7" width="12" height="8.5" rx="1" fill="#333" stroke="#111" stroke-width="0.8"/><rect x="6.8" y="9.5" width="1.5" height="3.5" fill="#eee"/></svg><svg class="a" style="left:119px;top:45px" width="18" height="16" viewBox="0 0 18 16"><path d="M2.5,5 L2.5,3.5 A3,3 0 0 1 8.5,3.5 L8.5,5" fill="none" stroke="#111" stroke-width="1.5"/><rect x="0.8" y="5" width="9.5" height="6.5" fill="#eee" stroke="#111" stroke-width="0.9"/><rect x="5" y="6.5" width="1.2" height="3.5" fill="#111"/><rect x="10" y="9" width="8" height="7" fill="#fff"/><rect x="13" y="12" width="5" height="4" fill="#6b6c6f"/><rect x="10" y="9" width="3" height="3" fill="#cfcfcf"/></svg><div class="a" style="left:138.79999999999995px;top:43.6px;width:31px;height:18.3px;background:#6f7073;border:1px solid #606164;border-radius:2px"></div><svg class="a" style="left:142px;top:47px" width="26" height="13" viewBox="0 0 26 13"><path d="M2,6 L7,1 L12,4 L11,11 L3,11 Z" fill="#8a8b8e"/><path d="M7,7 L13,13 M13,7 L7,13" stroke="#555659" stroke-width="1.5"/><path d="M16,5 L20,1 L24,5 Z M16,8 L20,12 L24,8 Z" fill="#5f6063"/></svg><div class="a" style="left:171.60000000000002px;top:43.6px;width:31px;height:18.3px;background:#6f7073;border:1px solid #606164;border-radius:2px"></div><svg class="a" style="left:174px;top:47px" width="26" height="13" viewBox="0 0 26 13"><path d="M2,12 L13,1" stroke="#58595c" stroke-width="1"/><path d="M3,2 L8,2 L3,7 Z" fill="none" stroke="#58595c" stroke-width="1"/><path d="M7,7 L13,13 M13,7 L7,13" stroke="#555659" stroke-width="1.5"/><path d="M16,5 L20,1 L24,5 Z M16,8 L20,12 L24,8 Z" fill="#5f6063"/></svg><div class="a" style="left:204.39999999999998px;top:43.6px;width:31px;height:18.3px;background:#6f7073;border:1px solid #606164;border-radius:2px"></div><svg class="a" style="left:206px;top:46px" width="30" height="15" viewBox="0 0 30 15"><rect x="4.5" y="4.5" width="9" height="9" fill="#fff"/><rect x="0.5" y="0.8" width="9" height="9" fill="#2e87f0"/><path d="M19,6 L23,1.5 L27,6 Z M19,9 L23,13.5 L27,9 Z" fill="#3a3b3d"/></svg><div class="a" style="left:0px;top:63.5px;width:236px;height:1px;background:#5d5e61"></div><svg class="a" style="left:1.5px;top:67px" width="18" height="17" viewBox="0 0 18 17"><g fill="#fff" stroke="#222" stroke-width="0.8"><path d="M1,13 L9,11 L17,13 L9,15.8 Z"/><path d="M1,9.5 L9,7.5 L17,9.5 L9,12.2 Z"/><path d="M1,6 L9,4 L17,6 L9,8.7 Z"/><path d="M1,2.6 L9,1 L17,2.6 L9,5 Z"/></g></svg><svg class="a" style="left:79px;top:67.5px" width="16" height="17" viewBox="0 0 16 17"><defs><linearGradient id="pg" x1="0" y1="0" x2="0" y2="1"><stop offset="0" stop-color="#d9e7ef"/><stop offset="1" stop-color="#fff"/></linearGradient></defs><path d="M1,1 L13,1 L13,12 L9,16 L1,16 Z" fill="url(#pg)" stroke="#111" stroke-width="1"/><path d="M13,12 L9,12 L9,16" fill="#eee" stroke="#111" stroke-width="0.8"/></svg><svg class="a" style="left:98px;top:67.5px" width="17" height="17" viewBox="0 0 17 17"><path d="M1,1 L13,1 L13,16 L1,16 Z" fill="#e8f1f6" stroke="#111" stroke-width="1"/><rect x="10" y="10" width="6" height="6" fill="#ccc" stroke="#222" stroke-width="0.8"/></svg><svg class="a" style="left:117px;top:68.5px" width="18" height="17" viewBox="0 0 18 17"><path d="M1,1 L9,1 L10,3 L13,3 L13,15 L1,15 Z" fill="#c8c8c8" stroke="#111" stroke-width="1"/><path d="M7,6 L17,6 L17,13 L14,16 L7,16 Z" fill="#f2f2f2" stroke="#111" stroke-width="1"/></svg><svg class="a" style="left:139px;top:68px" width="15" height="16" viewBox="0 0 15 16"><path d="M0.5,9 L7.5,5 L14.5,9 L7.5,13.5 Z" fill="#111"/><path d="M3,8 L7.5,10.5 L12,8" fill="none" stroke="#fff" stroke-width="0.8"/><path d="M5,1 L10,1 L10,5 L12,5 L7.5,10 L3,5 L5,5 Z" fill="#fff" stroke="#111" stroke-width="1"/></svg><svg class="a" style="left:158px;top:68px" width="16" height="16" viewBox="0 0 16 16"><path d="M0.5,9 L8,5 L15.5,9 L8,14 Z" fill="#fff" stroke="#111" stroke-width="1"/><path d="M0.5,5 L8,1 L15.5,5 L8,9 Z" fill="#222"/><path d="M5.5,2 L10.5,2 L10.5,6 L12.5,6 L8,11 L3.5,6 L5.5,6 Z" fill="#fff" stroke="#111" stroke-width="1"/></svg><svg class="a" style="left:177.5px;top:71.5px" width="17" height="8.5" viewBox="0 0 17 8.5"><defs><linearGradient id="mk" x1="0" y1="0" x2="1" y2="0"><stop offset="0" stop-color="#777"/><stop offset="1" stop-color="#111"/></linearGradient></defs><rect x="0.5" y="0.5" width="16" height="7.5" fill="url(#mk)" stroke="#111" stroke-width="1"/><circle cx="8.5" cy="4.3" r="2.8" fill="#fff"/></svg><svg class="a" style="left:197px;top:67.5px" width="17" height="17" viewBox="0 0 17 17"><path d="M5,2 L10,1 L16,7 L11,12 L5,9 Z" fill="#8b8c8f" stroke="#7a7b7e" stroke-width="0.5"/><path d="M4,3 L4,13 L1.5,13 L5,16 L8.5,13 L6,13 L6,3 Z" fill="#7c7d80"/></svg><svg class="a" style="left:218px;top:67.5px" width="14" height="17" viewBox="0 0 14 17"><path d="M1.5,4.5 L12.5,4.5 L11,16 L3,16 Z" fill="#f0f0f0" stroke="#111" stroke-width="1"/><path d="M1,4.5 A6,4 0 0 1 13,4.5" fill="#f0f0f0" stroke="#111" stroke-width="1"/><path d="M5,6 L5,15 M9,6 L9,15" stroke="#999" stroke-width="0.9"/></svg><div class="a" style="left:0px;top:89px;width:236px;height:469px;background:#77787b"></div><div class="a" style="left:0px;top:89px;width:236px;height:1px;background:#303133"></div><div class="a" style="left:0px;top:89px;width:1px;height:469px;background:#3c3d3f"></div><div class="a" style="left:4px;top:89px;width:1px;height:469px;background:#2e2f31"></div><div class="a" style="left:24px;top:89px;width:1px;height:469px;background:#2e2f31"></div><div class="a" style="left:42px;top:89px;width:1px;height:469px;background:#2e2f31"></div><div class="a" style="left:1px;top:90px;width:3px;height:468px;background:#717275"></div><div class="a" style="left:223px;top:89px;width:13px;height:469px;background:#5f6063;border-left:1px solid #4c4d50"></div><div class="a" style="left:224px;top:90px;width:11px;height:11px;background:linear-gradient(#85868a,#6f7073);border:1px solid #505154;border-radius:1px"></div><svg class="a" style="left:226px;top:93px" width="7" height="4" viewBox="0 0 7 4"><path d="M0,4 L3.5,0 L7,4 Z" fill="#333"/></svg><div class="a" style="left:224px;top:101px;width:11px;height:425px;background:linear-gradient(90deg,#9a9b9e 0,#9a9b9e 1px,#7d7e81 1px,#7b7c7f 100%);border-right:1px solid #505154;border-radius:2px"></div><svg class="a" style="left:226px;top:311.5px" width="6" height="9" viewBox="0 0 6 9"><path d="M0.5,1 H5.5 M0.5,4.3 H5.5 M0.5,7.6 H5.5" stroke="#4a4b4e" stroke-width="1"/></svg><div class="a" style="left:224px;top:545px;width:11px;height:10px;background:linear-gradient(#85868a,#6f7073);border:1px solid #505154;border-radius:1px"></div><svg class="a" style="left:226px;top:548px" width="7" height="4" viewBox="0 0 7 4"><path d="M0,0 L3.5,4 L7,0 Z" fill="#333"/></svg><div class="a" style="left:236px;top:89px;width:4px;height:469px;background:#56575a"></div><div class="a" style="left:236px;top:89px;width:1.7px;height:469px;background:#6e6f72"></div><div class="a" style="left:237.70000000000005px;top:89px;width:1.4px;height:469px;background:#37383a"></div><svg class="a" style="left:7px;top:105.5px" width="13" height="9" viewBox="0 0 13 9"><path d="M0.5,5 Q6,-0.5 12.5,4.5 Q6.5,10 0.5,5 Z" fill="#e8e8e8" stroke="#333" stroke-width="0.7"/><circle cx="6.2" cy="4.6" r="3.1" fill="#0a0a0a"/><circle cx="5.2" cy="3.6" r="0.9" fill="#ddd"/><path d="M0.8,4.8 Q6,0 12.3,4.3" fill="none" stroke="#111" stroke-width="1.2"/></svg><div class="a" style="left:29px;top:104px;width:10px;height:12px;border-top:1px solid #606164;border-left:1px solid #606164;border-bottom:1px solid #838487;border-right:1px solid #838487"></div><div class="a" style="left:49px;top:93px;width:26px;height:34px;background-color:#fff;background-image:linear-gradient(45deg,#cdcdcd 25%,transparent 25%,transparent 75%,#cdcdcd 75%),linear-gradient(45deg,#cdcdcd 25%,transparent 25%,transparent 75%,#cdcdcd 75%);background-size:8px 8px;background-position:0 0,4px 4px;border:1.5px solid #0c0c0c;overflow:hidden;"><svg width="23" height="31" style="position:absolute;left:0;top:0"><path d="M8,4 Q12,2 14,6 L15,12 L11,16 L13,22 L9,30 M6,10 L9,18 L6,26" fill="none" stroke="#999" stroke-width="1.2" opacity="0.8"/></svg></div><div class="a tx" style="left:78.30000000000001px;top:96.08px;font-size:11.4px;color:#f2f2f2;">100 % Multiply</div><div class="a tx" style="left:78.30000000000001px;top:115.58px;font-size:11.4px;color:#f2f2f2;">Lineart</div><div class="a" style="left:4px;top:130px;width:219px;height:1px;background:#2e2f31"></div><svg class="a" style="left:7px;top:142.5px" width="13" height="9" viewBox="0 0 13 9"><path d="M0.5,5 Q6,-0.5 12.5,4.5 Q6.5,10 0.5,5 Z" fill="#e8e8e8" stroke="#333" stroke-width="0.7"/><circle cx="6.2" cy="4.6" r="3.1" fill="#0a0a0a"/><circle cx="5.2" cy="3.6" r="0.9" fill="#ddd"/><path d="M0.8,4.8 Q6,0 12.3,4.3" fill="none" stroke="#111" stroke-width="1.2"/></svg><div class="a" style="left:29px;top:141px;width:10px;height:12px;border-top:1px solid #606164;border-left:1px solid #606164;border-bottom:1px solid #838487;border-right:1px solid #838487"></div><svg class="a" style="left:45px;top:146.5px" width="9.5" height="6" viewBox="0 0 9.5 6"><path d="M0,0 L9.5,0 L4.75,6 Z" fill="#f0f0f0"/></svg><svg class="a" style="left:62px;top:142px" width="16" height="11" viewBox="0 0 16 11"><path d="M1,2 L5,0.5 L7,2 L12,2 L12,9 L1,10 Z" fill="#f6f0a8" stroke="#222" stroke-width="0.8"/><path d="M4,5 L15.5,5 L12,10.5 L0.5,10.5 Z" fill="#505050" stroke="#222" stroke-width="0.8"/></svg><div class="a tx" style="left:82.30000000000001px;top:134.38px;font-size:11.4px;color:#f2f2f2;">100 % Through</div><div class="a tx" style="left:82.30000000000001px;top:149.68px;font-size:11.4px;color:#f2f2f2;">Color</div><div class="a" style="left:57px;top:163px;width:166px;height:1px;background:#2e2f31"></div><svg class="a" style="left:7px;top:179.0px" width="13" height="9" viewBox="0 0 13 9"><path d="M0.5,5 Q6,-0.5 12.5,4.5 Q6.5,10 0.5,5 Z" fill="#e8e8e8" stroke="#333" stroke-width="0.7"/><circle cx="6.2" cy="4.6" r="3.1" fill="#0a0a0a"/><circle cx="5.2" cy="3.6" r="0.9" fill="#ddd"/><path d="M0.8,4.8 Q6,0 12.3,4.3" fill="none" stroke="#111" stroke-width="1.2"/></svg><div class="a" style="left:29px;top:177.5px;width:10px;height:12px;border-top:1px solid #606164;border-left:1px solid #606164;border-bottom:1px solid #838487;border-right:1px solid #838487"></div><div class="a" style="left:65.30000000000001px;top:166px;width:26px;height:34.5px;background-color:#fff;background-image:linear-gradient(45deg,#cdcdcd 25%,transparent 25%,transparent 75%,#cdcdcd 75%),linear-gradient(45deg,#cdcdcd 25%,transparent 25%,transparent 75%,#cdcdcd 75%);background-size:8px 8px;background-position:0 0,4px 4px;border:1.5px solid #0c0c0c;overflow:hidden;"></div><div class="a tx" style="left:94.69999999999999px;top:170.08px;font-size:11.4px;color:#f2f2f2;">100 % Normal</div><div class="a tx" style="left:94.69999999999999px;top:189.18px;font-size:11.4px;color:#f2f2f2;">jewelry</div><div class="a" style="left:57px;top:204px;width:166px;height:1px;background:#2e2f31"></div><svg class="a" style="left:7px;top:220.0px" width="13" height="9" viewBox="0 0 13 9"><path d="M0.5,5 Q6,-0.5 12.5,4.5 Q6.5,10 0.5,5 Z" fill="#e8e8e8" stroke="#333" stroke-width="0.7"/><circle cx="6.2" cy="4.6" r="3.1" fill="#0a0a0a"/><circle cx="5.2" cy="3.6" r="0.9" fill="#ddd"/><path d="M0.8,4.8 Q6,0 12.3,4.3" fill="none" stroke="#111" stroke-width="1.2"/></svg><div class="a" style="left:29px;top:218.5px;width:10px;height:12px;border-top:1px solid #606164;border-left:1px solid #606164;border-bottom:1px solid #838487;border-right:1px solid #838487"></div><div class="a" style="left:65.30000000000001px;top:207px;width:26px;height:34.5px;background-color:#fff;background-image:linear-gradient(45deg,#cdcdcd 25%,transparent 25%,transparent 75%,#cdcdcd 75%),linear-gradient(45deg,#cdcdcd 25%,transparent 25%,transparent 75%,#cdcdcd 75%);background-size:8px 8px;background-position:0 0,4px 4px;border:1.5px solid #0c0c0c;overflow:hidden;"><svg width="23" height="31" style="position:absolute;left:0;top:0"><path d="M12,16 L13,19 L10,24 L11,20 Z" fill="#1b7f7f"/></svg></div><div class="a tx" style="left:94.69999999999999px;top:211.08px;font-size:11.4px;color:#f2f2f2;">100 % Normal</div><div class="a tx" style="left:94.69999999999999px;top:230.18px;font-size:11.4px;color:#f2f2f2;">scarf</div><div class="a" style="left:57px;top:245px;width:166px;height:1px;background:#2e2f31"></div><svg class="a" style="left:7px;top:261.0px" width="13" height="9" viewBox="0 0 13 9"><path d="M0.5,5 Q6,-0.5 12.5,4.5 Q6.5,10 0.5,5 Z" fill="#e8e8e8" stroke="#333" stroke-width="0.7"/><circle cx="6.2" cy="4.6" r="3.1" fill="#0a0a0a"/><circle cx="5.2" cy="3.6" r="0.9" fill="#ddd"/><path d="M0.8,4.8 Q6,0 12.3,4.3" fill="none" stroke="#111" stroke-width="1.2"/></svg><div class="a" style="left:29px;top:259.5px;width:10px;height:12px;border-top:1px solid #606164;border-left:1px solid #606164;border-bottom:1px solid #838487;border-right:1px solid #838487"></div><div class="a" style="left:65.30000000000001px;top:248px;width:26px;height:34.5px;background-color:#fff;background-image:linear-gradient(45deg,#cdcdcd 25%,transparent 25%,transparent 75%,#cdcdcd 75%),linear-gradient(45deg,#cdcdcd 25%,transparent 25%,transparent 75%,#cdcdcd 75%);background-size:8px 8px;background-position:0 0,4px 4px;border:1.5px solid #0c0c0c;overflow:hidden;"><svg width="23" height="31" style="position:absolute;left:0;top:0"><path d="M6,31 L9,24 L16,17 L19,16 L18,20 L22,31 Z" fill="#2b3236"/></svg></div><div class="a tx" style="left:94.69999999999999px;top:252.08px;font-size:11.4px;color:#f2f2f2;">100 % Normal</div><div class="a tx" style="left:94.69999999999999px;top:271.18px;font-size:11.4px;color:#f2f2f2;">leather</div><div class="a" style="left:57px;top:286px;width:166px;height:1px;background:#2e2f31"></div><svg class="a" style="left:7px;top:302.0px" width="13" height="9" viewBox="0 0 13 9"><path d="M0.5,5 Q6,-0.5 12.5,4.5 Q6.5,10 0.5,5 Z" fill="#e8e8e8" stroke="#333" stroke-width="0.7"/><circle cx="6.2" cy="4.6" r="3.1" fill="#0a0a0a"/><circle cx="5.2" cy="3.6" r="0.9" fill="#ddd"/><path d="M0.8,4.8 Q6,0 12.3,4.3" fill="none" stroke="#111" stroke-width="1.2"/></svg><div class="a" style="left:29px;top:300.5px;width:10px;height:12px;border-top:1px solid #606164;border-left:1px solid #606164;border-bottom:1px solid #838487;border-right:1px solid #838487"></div><div class="a" style="left:65.30000000000001px;top:289px;width:26px;height:34.5px;background-color:#fff;background-image:linear-gradient(45deg,#cdcdcd 25%,transparent 25%,transparent 75%,#cdcdcd 75%),linear-gradient(45deg,#cdcdcd 25%,transparent 25%,transparent 75%,#cdcdcd 75%);background-size:8px 8px;background-position:0 0,4px 4px;border:1.5px solid #0c0c0c;overflow:hidden;"><svg width="23" height="31" style="position:absolute;left:0;top:0"><path d="M6,24 L5,28 L6,30" fill="none" stroke="#a0673a" stroke-width="1"/></svg></div><div class="a tx" style="left:94.69999999999999px;top:293.08px;font-size:11.4px;color:#f2f2f2;">100 % Normal</div><div class="a tx" style="left:94.69999999999999px;top:312.18px;font-size:11.4px;color:#f2f2f2;">belt</div><div class="a" style="left:57px;top:327px;width:166px;height:1px;background:#2e2f31"></div><svg class="a" style="left:7px;top:343.0px" width="13" height="9" viewBox="0 0 13 9"><path d="M0.5,5 Q6,-0.5 12.5,4.5 Q6.5,10 0.5,5 Z" fill="#e8e8e8" stroke="#333" stroke-width="0.7"/><circle cx="6.2" cy="4.6" r="3.1" fill="#0a0a0a"/><circle cx="5.2" cy="3.6" r="0.9" fill="#ddd"/><path d="M0.8,4.8 Q6,0 12.3,4.3" fill="none" stroke="#111" stroke-width="1.2"/></svg><div class="a" style="left:29px;top:341.5px;width:10px;height:12px;border-top:1px solid #606164;border-left:1px solid #606164;border-bottom:1px solid #838487;border-right:1px solid #838487"></div><div class="a" style="left:65.30000000000001px;top:330px;width:26px;height:34.5px;background-color:#fff;background-image:linear-gradient(45deg,#cdcdcd 25%,transparent 25%,transparent 75%,#cdcdcd 75%),linear-gradient(45deg,#cdcdcd 25%,transparent 25%,transparent 75%,#cdcdcd 75%);background-size:8px 8px;background-position:0 0,4px 4px;border:1.5px solid #0c0c0c;overflow:hidden;"><svg width="23" height="31" style="position:absolute;left:0;top:0"><path d="M4,31 L6,26 L9,22 L13,19 L18,15 L20,17 L23,17 L23,31 Z" fill="#c9c9c3"/></svg></div><div class="a tx" style="left:94.69999999999999px;top:334.08px;font-size:11.4px;color:#f2f2f2;">100 % Normal</div><div class="a tx" style="left:94.69999999999999px;top:353.18px;font-size:11.4px;color:#f2f2f2;">white shirt</div><div class="a" style="left:57px;top:368px;width:166px;height:1px;background:#2e2f31"></div><svg class="a" style="left:7px;top:384.0px" width="13" height="9" viewBox="0 0 13 9"><path d="M0.5,5 Q6,-0.5 12.5,4.5 Q6.5,10 0.5,5 Z" fill="#e8e8e8" stroke="#333" stroke-width="0.7"/><circle cx="6.2" cy="4.6" r="3.1" fill="#0a0a0a"/><circle cx="5.2" cy="3.6" r="0.9" fill="#ddd"/><path d="M0.8,4.8 Q6,0 12.3,4.3" fill="none" stroke="#111" stroke-width="1.2"/></svg><div class="a" style="left:43.69999999999999px;top:369px;width:178.3px;height:39px;background:linear-gradient(#8299a8,#6b8291);border-top-left-radius:3px;border-bottom-left-radius:3px;border:1px solid #5e7686;border-right:none"></div><div class="a" style="left:61px;top:370.5px;width:4px;height:35px;background:#f07b70"></div><div class="a" style="left:66.5px;top:370px;width:30px;height:36.5px;background:#0c0c0c"></div><div class="a" style="left:68px;top:371.5px;width:27px;height:33.5px;background:#9fb6c4"></div><div class="a" style="left:69px;top:372.5px;width:25px;height:31.5px;background-color:#fff;background-image:linear-gradient(45deg,#cdcdcd 25%,transparent 25%,transparent 75%,#cdcdcd 75%),linear-gradient(45deg,#cdcdcd 25%,transparent 25%,transparent 75%,#cdcdcd 75%);background-size:8px 8px;background-position:0 0,4px 4px;border:1px solid #0c0c0c"><svg width="23" height="30" style="position:absolute;left:0;top:0"><circle cx="15" cy="10" r="3.2" fill="#8f5446" opacity="0.85"/></svg></div><svg class="a" style="left:25.5px;top:382px" width="13" height="12" viewBox="0 0 13 12"><path d="M1,11 L9,3 L11,5 L3,11 Z" fill="#f4f4f4" stroke="#111" stroke-width="0.9"/><path d="M9,3 L11,1 L12.5,2.5 L11,5 Z" fill="#111"/></svg><div class="a tx" style="left:98.70000000000005px;top:375.08px;font-size:11.4px;color:#f2f2f2;">100 % Normal</div><div class="a tx" style="left:98.70000000000005px;top:394.18px;font-size:11.4px;color:#f2f2f2;">Layer 1</div><div class="a" style="left:57px;top:409px;width:166px;height:1px;background:#2e2f31"></div><svg class="a" style="left:7px;top:425.0px" width="13" height="9" viewBox="0 0 13 9"><path d="M0.5,5 Q6,-0.5 12.5,4.5 Q6.5,10 0.5,5 Z" fill="#e8e8e8" stroke="#333" stroke-width="0.7"/><circle cx="6.2" cy="4.6" r="3.1" fill="#0a0a0a"/><circle cx="5.2" cy="3.6" r="0.9" fill="#ddd"/><path d="M0.8,4.8 Q6,0 12.3,4.3" fill="none" stroke="#111" stroke-width="1.2"/></svg><div class="a" style="left:29px;top:423.5px;width:10px;height:12px;border-top:1px solid #606164;border-left:1px solid #606164;border-bottom:1px solid #838487;border-right:1px solid #838487"></div><div class="a" style="left:65.30000000000001px;top:412px;width:26px;height:34.5px;background-color:#fff;background-image:linear-gradient(45deg,#cdcdcd 25%,transparent 25%,transparent 75%,#cdcdcd 75%),linear-gradient(45deg,#cdcdcd 25%,transparent 25%,transparent 75%,#cdcdcd 75%);background-size:8px 8px;background-position:0 0,4px 4px;border:1.5px solid #0c0c0c;overflow:hidden;"><svg width="23" height="31" style="position:absolute;left:0;top:0"><path d="M6,6 Q9,3 14,4 Q18,6 17,11 L16,16 Q14,20 12,21 L9,24 L7,22 L8,17 Q5,12 6,6 Z" fill="#c0946f"/></svg></div><div class="a tx" style="left:94.69999999999999px;top:416.08px;font-size:11.4px;color:#f2f2f2;">100 % Normal</div><div class="a tx" style="left:94.69999999999999px;top:435.18px;font-size:11.4px;color:#f2f2f2;">skin</div><div class="a" style="left:57px;top:450px;width:166px;height:1px;background:#2e2f31"></div><svg class="a" style="left:7px;top:466.0px" width="13" height="9" viewBox="0 0 13 9"><path d="M0.5,5 Q6,-0.5 12.5,4.5 Q6.5,10 0.5,5 Z" fill="#e8e8e8" stroke="#333" stroke-width="0.7"/><circle cx="6.2" cy="4.6" r="3.1" fill="#0a0a0a"/><circle cx="5.2" cy="3.6" r="0.9" fill="#ddd"/><path d="M0.8,4.8 Q6,0 12.3,4.3" fill="none" stroke="#111" stroke-width="1.2"/></svg><div class="a" style="left:29px;top:464.5px;width:10px;height:12px;border-top:1px solid #606164;border-left:1px solid #606164;border-bottom:1px solid #838487;border-right:1px solid #838487"></div><div class="a" style="left:65.30000000000001px;top:453px;width:26px;height:34.5px;background-color:#fff;background-image:linear-gradient(45deg,#cdcdcd 25%,transparent 25%,transparent 75%,#cdcdcd 75%),linear-gradient(45deg,#cdcdcd 25%,transparent 25%,transparent 75%,#cdcdcd 75%);background-size:8px 8px;background-position:0 0,4px 4px;border:1.5px solid #0c0c0c;overflow:hidden;"><svg width="23" height="31" style="position:absolute;left:0;top:0"><path d="M10,3 Q16,0 19,4 L19,9 L17,12 L15,9 L13,11 L12,18 L11,25 L12,30 L4,31 L2,27 L5,21 L6,14 L8,7 Z" fill="#1d1a18"/><path d="M17,13 L19,16 L17,18" fill="#eee" stroke="#555" stroke-width="0.5"/><path d="M11,26 L12,28" stroke="#1b7f7f"/></svg></div><div class="a tx" style="left:94.69999999999999px;top:457.08px;font-size:11.4px;color:#f2f2f2;">100 % Normal</div><div class="a tx" style="left:94.69999999999999px;top:476.18px;font-size:11.4px;color:#f2f2f2;">hair</div><div class="a" style="left:4px;top:491px;width:219px;height:1px;background:#2e2f31"></div><svg class="a" style="left:7px;top:507.5px" width="13" height="9" viewBox="0 0 13 9"><path d="M0.5,5 Q6,-0.5 12.5,4.5 Q6.5,10 0.5,5 Z" fill="#e8e8e8" stroke="#333" stroke-width="0.7"/><circle cx="6.2" cy="4.6" r="3.1" fill="#0a0a0a"/><circle cx="5.2" cy="3.6" r="0.9" fill="#ddd"/><path d="M0.8,4.8 Q6,0 12.3,4.3" fill="none" stroke="#111" stroke-width="1.2"/></svg><div class="a" style="left:29px;top:506px;width:10px;height:12px;border-top:1px solid #606164;border-left:1px solid #606164;border-bottom:1px solid #838487;border-right:1px solid #838487"></div><div class="a" style="left:48.80000000000001px;top:494.7px;width:26.5px;height:34px;background:#2f2f26;border:1.5px solid #0c0c0c;overflow:hidden;"></div><div class="a tx" style="left:78.30000000000001px;top:497.78px;font-size:11.4px;color:#f2f2f2;">100 % Normal</div><div class="a tx" style="left:78.30000000000001px;top:517.18px;font-size:11.4px;color:#f2f2f2;">background</div><div class="a" style="left:4px;top:532px;width:219px;height:1px;background:#2e2f31"></div><svg class="a" style="left:7px;top:548.5px" width="13" height="9" viewBox="0 0 13 9"><path d="M0.5,5 Q6,-0.5 12.5,4.5 Q6.5,10 0.5,5 Z" fill="#e8e8e8" stroke="#333" stroke-width="0.7"/><circle cx="6.2" cy="4.6" r="3.1" fill="#0a0a0a"/><circle cx="5.2" cy="3.6" r="0.9" fill="#ddd"/><path d="M0.8,4.8 Q6,0 12.3,4.3" fill="none" stroke="#111" stroke-width="1.2"/></svg><div class="a" style="left:29px;top:547px;width:10px;height:12px;border-top:1px solid #606164;border-left:1px solid #606164;border-bottom:1px solid #838487;border-right:1px solid #838487"></div><div class="a" style="left:48.80000000000001px;top:535.8px;width:26.5px;height:30px;background:linear-gradient(90deg,#e6e6e6,#fff);border:1.5px solid #0c0c0c;overflow:hidden;"></div><div class="a tx" style="left:78.30000000000001px;top:538.88px;font-size:11.4px;color:#f2f2f2;">100 % Normal</div><div class="a" style="left:0px;top:557px;width:240px;height:1px;background:#3a3b3d"></div>
</div>
</body></html>
